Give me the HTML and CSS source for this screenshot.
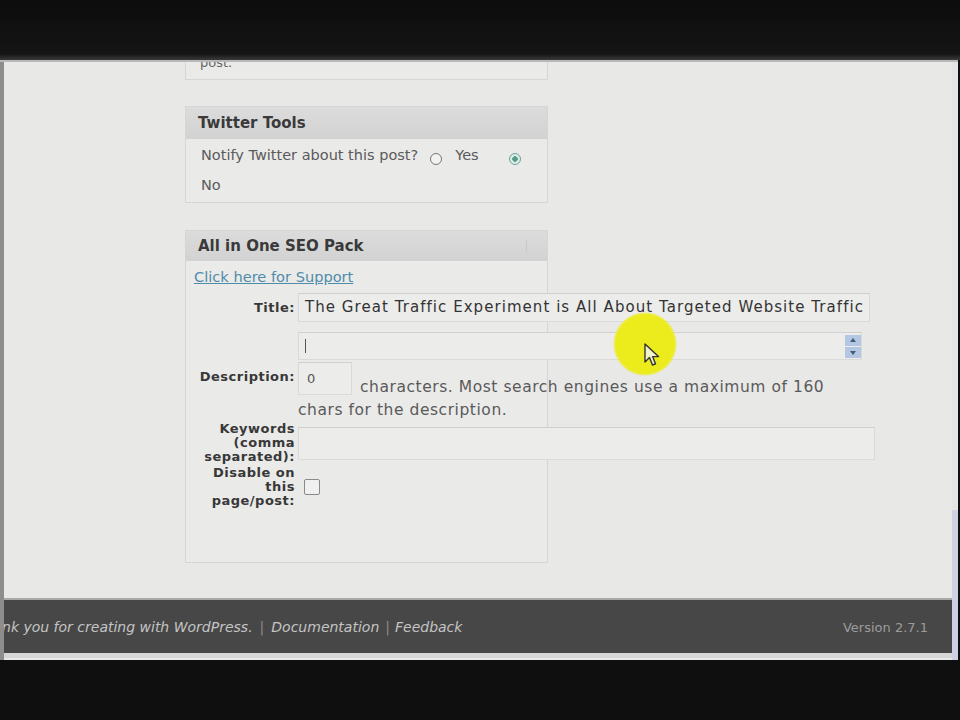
FILE: index.html
```html
<!DOCTYPE html>
<html>
<head>
<meta charset="utf-8">
<link rel="stylesheet" href="styles.css">
</head>
<body>
<div class="top"></div>
<div class="screen">
  <div class="page">
    <div class="content">
      <div class="sidebar">
        <div class="box box-partial"><div class="partial-text">post.</div></div>

        <div class="box twitter">
          <h3 class="box-head">Twitter Tools</h3>
          <div class="box-body">
            <div class="tw-line">
              <span>Notify Twitter about this post?</span>
              <span class="radio"></span>
              <span class="yes">Yes</span>
              <span class="radio checked"></span>
            </div>
            <div class="tw-line tw-no">No</div>
          </div>
        </div>

        <div class="box seo">
          <h3 class="box-head seo-head">All in One SEO Pack<span class="head-mark"></span></h3>
          <div class="seo-body">
            <a class="support" href="#">Click here for Support</a>
            <div class="row row-title">
              <div class="lbl">Title:</div>
              <div class="field title-field">The Great Traffic Experiment is All About Targeted Website Traffic</div>
            </div>
            <div class="row row-desc">
              <div class="lbl">Description:</div>
              <div class="desc-col">
                <div class="field textarea">
                  <span class="caret"></span>
                  <span class="spin"><span class="spin-btn up"></span><span class="spin-btn down"></span></span>
                </div>
                <div class="counter-line">
                  <div class="field counter">0</div>
                  <span class="help">characters. Most search engines use a maximum of 160</span>
                </div>
                <div class="help help-2">chars for the description.</div>
              </div>
            </div>
            <div class="row row-kw">
              <div class="lbl">Keywords<br>(comma<br>separated):</div>
              <div class="field kw-field"></div>
            </div>
            <div class="row row-dis">
              <div class="lbl">Disable on<br>this<br>page/post:</div>
              <span class="checkbox"></span>
            </div>
          </div>
        </div>
      </div>

      <div class="highlight">
        <svg class="pointer" width="16" height="24" viewBox="0 0 16 24">
          <path d="M1 1 L1 19 L5.5 14.5 L8.5 22 L11.5 20.8 L8.6 13.6 L14.5 13.6 Z" fill="#f3f3c8" stroke="#333" stroke-width="1.4" stroke-linejoin="round"/>
        </svg>
      </div>
    </div>

    <div class="footer">
      <div class="foot-left">
        <span class="thanks">Thank you for creating with <span class="wp">WordPress</span>.</span>
        <span class="sep">|</span>
        <span>Documentation</span>
        <span class="sep sep2">|</span>
        <span>Feedback</span>
      </div>
      <div class="version">Version 2.7.1</div>
    </div>
    <div class="under"></div>
  </div>
  <div class="scrollbar"><div class="thumb"></div></div>
</div>
</body>
</html>
```

FILE: styles.css
```css
html, body {
  margin: 0;
  padding: 0;
  background: #0f0f0f;
  font-family: "DejaVu Sans", Verdana, sans-serif;
  overflow: hidden;
}

.top {
  height: 60px;
  background: linear-gradient(#0c0c0c 0, #151515 54px, #3a3a3a 60px);
}

.screen {
  display: flex;
  width: 958px;
  height: 600px;
  background: #e8e8e7;
  border-top: 2px solid #b8b8b8;
  box-sizing: border-box;
}

.page {
  flex: 1;
  display: flex;
  flex-direction: column;
  border-left: 4px solid #8d8d8d;
}

.content {
  position: relative;
  height: 536px;
  overflow: hidden;
}

.sidebar {
  margin-left: 181px;
  width: 363px;
  display: flex;
  flex-direction: column;
}

.box {
  border: 1px solid #d6d6d6;
  background: #eaeae9;
}

.box-partial {
  height: 17px;
  border-top: none;
  overflow: hidden;
}

.partial-text {
  margin-top: -8px;
  margin-left: 14px;
  font-size: 13px;
  line-height: 18px;
  color: #666;
}

.twitter {
  margin-top: 26px;
}

.box-head {
  margin: 0;
  height: 32px;
  padding-left: 12px;
  display: flex;
  align-items: center;
  font-size: 15px;
  font-weight: bold;
  color: #3a3a3a;
  background: linear-gradient(#dcdcdc, #d2d2d2);
  position: relative;
}

.seo-head {
  height: 30px;
}

.box-body {
  padding: 4px 0 4px 15px;
  font-size: 14.5px;
  color: #5a5a5a;
}

.tw-line {
  display: flex;
  align-items: center;
  height: 24px;
}

.tw-no {
  height: 26px;
  margin-top: 5px;
}

.radio {
  width: 10px;
  height: 10px;
  border: 1.5px solid #777;
  border-radius: 50%;
  background: #f2f2f2;
  margin-left: 12px;
  margin-top: 8px;
}

.yes {
  margin-left: 13px;
}

.radio.checked {
  margin-left: 30px;
  border-color: #6aa596;
  background: radial-gradient(circle, #5a9a88 0 2.5px, #dcece8 3px);
  margin-top: 8px;
}

.seo {
  margin-top: 27px;
  height: 331px;
}

.head-mark {
  position: absolute;
  right: 12px;
  top: 9px;
  width: 8px;
  height: 12px;
  border-left: 1px solid #c8c8c8;
}

.seo-body {
  padding-left: 8px;
}

.support {
  display: block;
  margin-top: 8px;
  font-size: 14.6px;
  line-height: 16px;
  color: #4f8cab;
  text-decoration: underline;
}

.row {
  display: flex;
  align-items: center;
  margin-left: -8px;
}

.lbl {
  width: 109px;
  flex: none;
  margin-right: 3px;
  text-align: right;
  font-size: 13px;
  letter-spacing: 0.5px;
  line-height: 14px;
  font-weight: bold;
  color: #383838;
}

.field {
  flex: none;
  background: #ececeb;
  border: 1px solid #dadada;
  border-top-color: #d0d0d0;
  box-sizing: border-box;
}

.row-title {
  margin-top: 8px;
}

.title-field {
  width: 572px;
  height: 29px;
  padding-left: 6px;
  font-size: 15px;
  letter-spacing: 1.05px;
  line-height: 27px;
  color: #333;
  white-space: nowrap;
  overflow: hidden;
}

.row-desc {
  margin-top: 10px;
}

.desc-col {
  display: flex;
  flex-direction: column;
}

.textarea {
  width: 564px;
  height: 28px;
  display: flex;
  justify-content: space-between;
  align-items: center;
}

.caret {
  width: 0;
  height: 14px;
  border-left: 1.5px solid #555;
  margin-left: 6px;
}

.spin {
  display: flex;
  flex-direction: column;
  gap: 1px;
}

.spin-btn {
  width: 16px;
  height: 11px;
  background: #b3c7e2;
  position: relative;
}

.spin-btn::after {
  content: "";
  position: absolute;
  left: 5px;
  border-left: 3px solid transparent;
  border-right: 3px solid transparent;
}

.spin-btn.up::after {
  top: 3px;
  border-bottom: 4px solid #445a7a;
}

.spin-btn.down::after {
  top: 4px;
  border-top: 4px solid #445a7a;
}

.counter-line {
  display: flex;
  align-items: flex-end;
  margin-top: 2px;
}

.counter {
  width: 54px;
  height: 33px;
  padding: 7px 0 0 8px;
  font-size: 13px;
  line-height: 18px;
  color: #555;
}

.help {
  font-size: 15.5px;
  letter-spacing: 0.55px;
  line-height: 23px;
  color: #5a5a5a;
  margin-left: 8px;
  margin-bottom: -4px;
  white-space: nowrap;
}

.help-2 {
  margin-left: 0;
  margin-bottom: 0;
  margin-top: 4px;
}

.row-kw {
  margin-top: 0;
}

.kw-field {
  width: 577px;
  height: 33px;
}

.row-dis {
  margin-top: 2px;
}

.checkbox {
  width: 16px;
  height: 16px;
  box-sizing: border-box;
  border: 1.5px solid #8a8a8a;
  border-radius: 2px;
  background: #f0f0f0;
  margin-left: 6px;
}

.highlight {
  position: absolute;
  left: 609px;
  top: 250px;
  width: 64px;
  height: 64px;
  border-radius: 50%;
  background: radial-gradient(circle, #ecec1c 0 29px, rgba(236,236,28,0.6) 31px, rgba(236,236,28,0) 32px);
}

.pointer {
  position: absolute;
  left: 31px;
  top: 31px;
}

.footer {
  height: 55px;
  background: #474747;
  border-top: 2px solid #a8a8a8;
  box-sizing: border-box;
  display: flex;
  align-items: center;
  justify-content: space-between;
  overflow: hidden;
}

.foot-left {
  display: flex;
  align-items: center;
  font-size: 14px;
  font-style: italic;
  color: #c4c4c4;
  white-space: nowrap;
  margin-left: -28px;
  margin-top: 1px;
}

.sep {
  color: #8a8a8a;
  font-style: normal;
  margin: 0 7px;
}

.sep2 {
  margin: 0 5px 0 6px;
}

.version {
  font-size: 13px;
  color: #9c9c9c;
  margin-right: 24px;
  margin-top: 1px;
}

.under {
  height: 5px;
  background: #d6d6d6;
}

.scrollbar {
  width: 6px;
  display: flex;
  flex-direction: column;
  justify-content: flex-end;
  background: #e4e4e6;
}

.thumb {
  height: 150px;
  background: #cfd1e4;
}
```
